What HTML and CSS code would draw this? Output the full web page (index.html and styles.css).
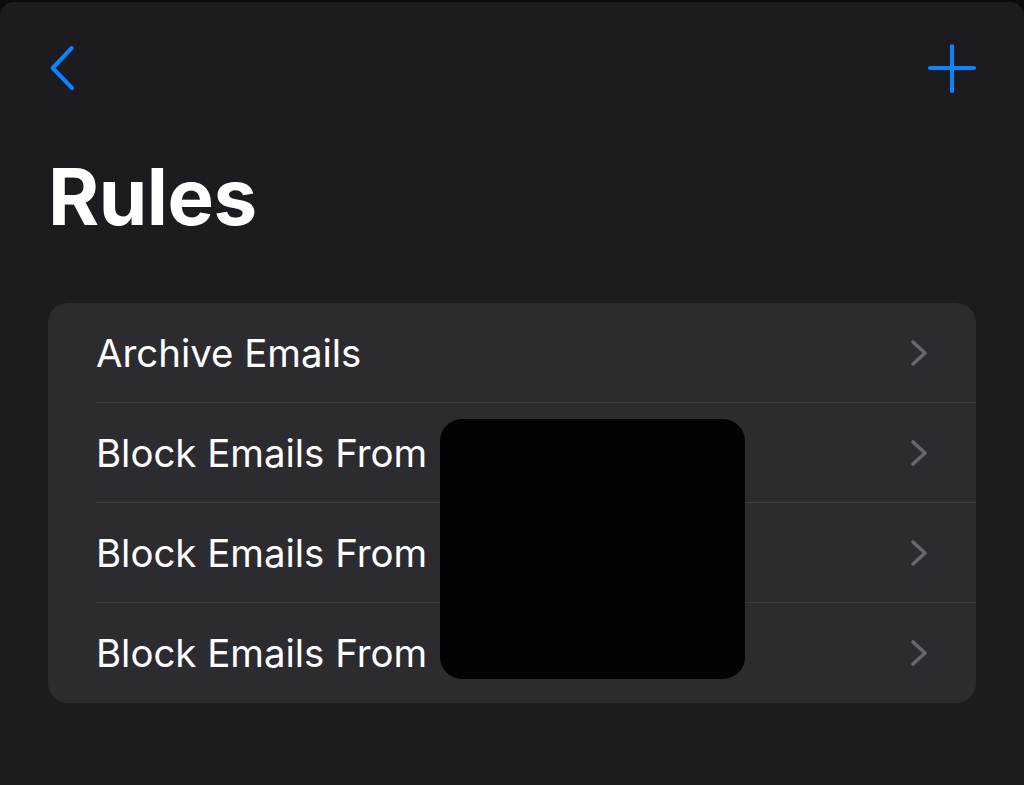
FILE: index.html
```html
<!DOCTYPE html>
<html lang="en">
<head>
<meta charset="utf-8">
<title>Rules</title>
<link rel="stylesheet" href="styles.css">
</head>
<body>
<div class="sheet">
  <header class="nav">
    <svg class="back" width="30" height="46" viewBox="0 0 30 46" aria-label="Back">
      <path d="M23.7 3 L4.7 23 L24 43" fill="none" stroke="#0a84ff" stroke-width="4" stroke-linecap="round" stroke-linejoin="round"/>
    </svg>
    <svg class="add" width="48" height="50" viewBox="0 0 48 50" aria-label="Add">
      <path d="M24 2 V47 M2 24 H46" fill="none" stroke="#0a84ff" stroke-width="4" stroke-linecap="round"/>
    </svg>
  </header>
  <h1 class="title">Rules</h1>
  <div class="card">
    <div class="row"><div class="row-inner"><span class="label">Archive Emails</span><svg class="chev" width="18" height="28" viewBox="0 0 18 28"><path d="M3 3 L15 14 L3 25" fill="none" stroke="#67666c" stroke-width="3.6" stroke-linecap="round" stroke-linejoin="round"/></svg></div></div>
    <div class="row"><div class="row-inner"><span class="label">Block Emails From</span><svg class="chev" width="18" height="28" viewBox="0 0 18 28"><path d="M3 3 L15 14 L3 25" fill="none" stroke="#67666c" stroke-width="3.6" stroke-linecap="round" stroke-linejoin="round"/></svg></div></div>
    <div class="row"><div class="row-inner"><span class="label">Block Emails From</span><svg class="chev" width="18" height="28" viewBox="0 0 18 28"><path d="M3 3 L15 14 L3 25" fill="none" stroke="#67666c" stroke-width="3.6" stroke-linecap="round" stroke-linejoin="round"/></svg></div></div>
    <div class="row last"><div class="row-inner"><span class="label">Block Emails From</span><svg class="chev" width="18" height="28" viewBox="0 0 18 28"><path d="M3 3 L15 14 L3 25" fill="none" stroke="#67666c" stroke-width="3.6" stroke-linecap="round" stroke-linejoin="round"/></svg></div></div>
    <div class="redact"></div>
  </div>
</div>
</body>
</html>
```
FILE: styles.css
```css
html, body {
  margin: 0;
  padding: 0;
}
body {
  background: #0c0b0f;
  padding-top: 2px;
  font-family: Inter, "Noto Sans", "Liberation Sans", sans-serif;
  color: #ffffff;
}
.sheet {
  background: #1c1b20;
  min-height: 783px;
  border-radius: 14px 14px 0 0;
  padding: 0 48px;
  box-sizing: border-box;
}
.nav {
  display: flex;
  justify-content: space-between;
  align-items: flex-start;
  padding-top: 43px;
  height: 50px;
}
.back {
  display: block;
}
.add {
  display: block;
  margin-top: -1px;
}
.title {
  margin: 63px 0 0 0;
  font-size: 78px;
  line-height: 78px;
  font-weight: 700;
  letter-spacing: -0.5px;
  color: #ffffff;
}
.card {
  position: relative;
  margin-top: 67px;
  background: #2c2b30;
  border-radius: 20px;
  overflow: hidden;
}
.row {
  height: 100px;
  padding-left: 48px;
}
.row-inner {
  height: 100%;
  display: flex;
  align-items: center;
  justify-content: space-between;
  padding-right: 48px;
  border-bottom: 1px solid #3e3d42;
  box-sizing: border-box;
}
.row.last .row-inner {
  border-bottom: none;
}
.label {
  font-size: 38.4px;
  font-weight: 400;
  color: #ffffff;
  letter-spacing: 0;
}
.chev {
  display: block;
}
.redact {
  position: absolute;
  left: 392px;
  top: 116px;
  width: 305px;
  height: 260px;
  background: #030204;
  border-radius: 22px;
}
```
